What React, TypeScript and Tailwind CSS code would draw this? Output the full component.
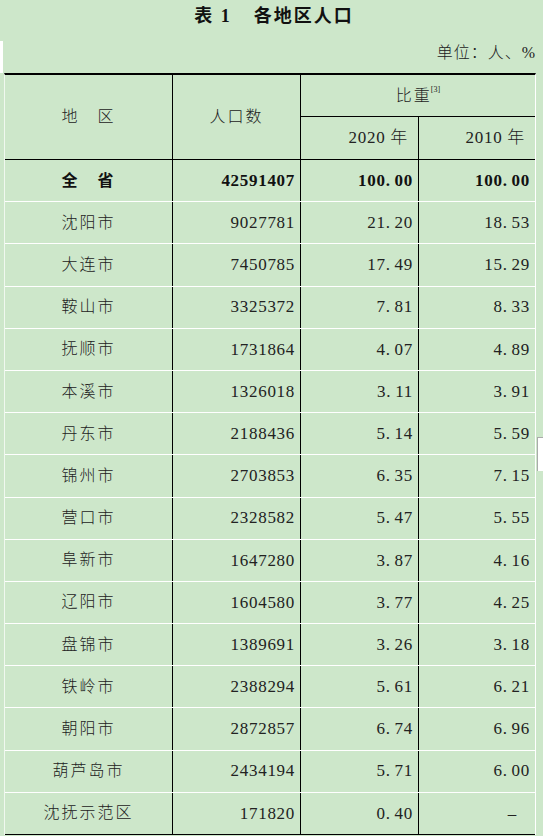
const rows: [string, string, string, string][] = [
  ["沈阳市", "9027781", "21.20", "18.53"],
  ["大连市", "7450785", "17.49", "15.29"],
  ["鞍山市", "3325372", "7.81", "8.33"],
  ["抚顺市", "1731864", "4.07", "4.89"],
  ["本溪市", "1326018", "3.11", "3.91"],
  ["丹东市", "2188436", "5.14", "5.59"],
  ["锦州市", "2703853", "6.35", "7.15"],
  ["营口市", "2328582", "5.47", "5.55"],
  ["阜新市", "1647280", "3.87", "4.16"],
  ["辽阳市", "1604580", "3.77", "4.25"],
  ["盘锦市", "1389691", "3.26", "3.18"],
  ["铁岭市", "2388294", "5.61", "6.21"],
  ["朝阳市", "2872857", "6.74", "6.96"],
  ["葫芦岛市", "2434194", "5.71", "6.00"],
  ["沈抚示范区", "171820", "0.40", "–"],
];

const cjk = "font-['Liberation_Serif','Noto_Sans_CJK_SC',serif]";
const cols = "grid grid-cols-[167px_128px_118px_117px]";

function Num({ v }: { v: string }) {
  const [a, b] = v.split(".");
  if (b === undefined) return <>{v}</>;
  return (
    <>
      {a}
      <span className="mr-[4px]">.</span>
      {b}
    </>
  );
}

function Row({ r, bold, last }: { r: [string, string, string, string]; bold?: boolean; last?: boolean }) {
  const weight = bold ? "font-bold text-[#111]" : "font-light text-[#222]";
  const num = "flex items-center justify-end border-l border-black text-[17px] tracking-[0.7px]";
  return (
    <div className={`${cols} h-[42.2px] border-b ${last ? "border-black" : "border-white"} ${weight}`}>
      <div className="flex items-center justify-center text-[16px] tracking-[2px]">{r[0]}</div>
      <div className={`${num} pr-[5px]`}>
        <Num v={r[1]} />
      </div>
      <div className={`${num} pr-[5px]`}>
        <Num v={r[2]} />
      </div>
      <div className={`${num} ${r[3] === "–" ? "pr-[18px]" : "pr-[5px]"}`}>
        <Num v={r[3]} />
      </div>
    </div>
  );
}

export default function App() {
  return (
    <div className={`relative h-[836px] w-[543px] overflow-hidden bg-[#cde7ca] ${cjk}`}>
      <div className="flex h-[33px] items-center justify-center pl-[5px] text-[18px] font-bold tracking-[2px] text-[#111]">
        <span>表 1</span>
        <span className="ml-[22px]">各地区人口</span>
      </div>
      <div className="flex h-[40px] items-center justify-end pr-[7px] text-[16px] font-light tracking-[1px] text-[#222]">
        单位：人、%
      </div>

      <div className="ml-[4px] w-[532px] border-l border-r border-t-2 border-l-white/70 border-r-white border-t-black">
        <div className={`${cols} h-[85px] grid-rows-[42px_42px] border-b border-black font-light text-[16px] text-[#222]`}>
          <div className="row-span-2 flex items-center justify-center tracking-[2px]">地　区</div>
          <div className="row-span-2 flex items-center justify-center border-l border-black tracking-[2px]">
            人口数
          </div>
          <div className="col-span-2 flex items-center justify-center border-b border-l border-black tracking-[2px]">
            比重
            <sup className="-ml-[1px] -mt-[4px] text-[8px] tracking-normal">[3]</sup>
          </div>
          <div className="flex items-center justify-end border-l border-black pr-[10px] text-[17px] tracking-[0.7px]">
            2020 年
          </div>
          <div className="flex items-center justify-end border-l border-black pr-[10px] text-[17px] tracking-[0.7px]">
            2010 年
          </div>
        </div>

        <Row r={["全　省", "42591407", "100.00", "100.00"]} bold />
        {rows.map((r, i) => (
          <Row key={r[0]} r={r} last={i === rows.length - 1} />
        ))}
      </div>

      <div className="absolute left-0 top-[41px] h-[32px] w-[3px] bg-white" />
      <div className="absolute right-0 top-[437px] h-[34px] w-[6px] border-l border-t border-[#aaa] bg-white" />
    </div>
  );
}
